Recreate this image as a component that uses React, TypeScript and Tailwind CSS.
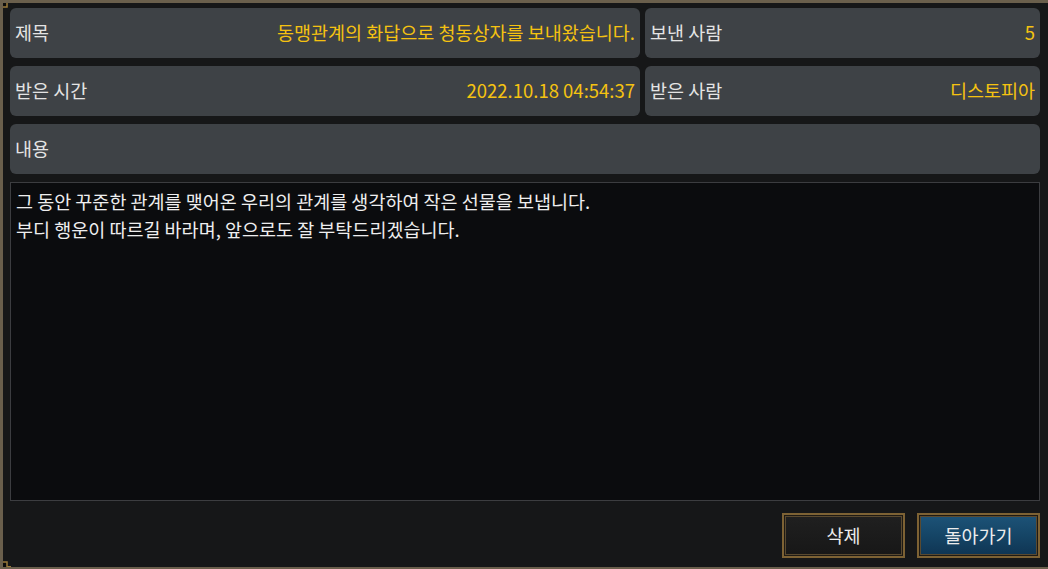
import React from "react";

type FieldProps = {
  label: string;
  value?: string;
  className?: string;
};

const Field: React.FC<FieldProps> = ({ label, value, className }) => (
  <div
    className={`flex h-[50px] items-center justify-between rounded-[6px] bg-[#3e4246] pl-[5px] pr-[5px] pb-[1px] ${className ?? ""}`}
  >
    <span className="text-[#e4e4e4]">{label}</span>
    {value ? <span className="text-[#f5c211]">{value}</span> : null}
  </div>
);

const Corner: React.FC<{ className: string }> = ({ className }) => (
  <svg
    className={`absolute h-[12px] w-[12px] ${className}`}
    viewBox="0 0 12 12"
  >
    <rect x="0" y="0" width="7" height="7" fill="#0c0c0c" stroke="#9a7a3a" strokeWidth="1.5" />
    <rect x="7" y="0" width="4" height="3" fill="#9a7a3a" />
    <rect x="0" y="7" width="3" height="4" fill="#9a7a3a" />
  </svg>
);

const GameButton: React.FC<{ label: string; blue?: boolean }> = ({
  label,
  blue,
}) => (
  <button
    className={`relative flex h-[45px] w-[123px] items-center justify-center border-2 border-[#7d6234] text-[18.5px] text-[#ececec] shadow-[inset_0_0_0_1px_#1e1a14,inset_0_0_0_2px_#5a4a30] ${
      blue
        ? "bg-gradient-to-b from-[#1d5378] via-[#154566] to-[#0f3452]"
        : "bg-gradient-to-b from-[#202020] to-[#171717]"
    }`}
  >
    {label}
  </button>
);

export default function App() {
  return (
    <div
      className="relative h-[569px] w-[1048px] overflow-hidden border-b-2 border-l-[3px] border-t-[3px] border-[#6a5f4c] bg-[#161718] text-[18.5px] leading-none"
      style={{
        fontFamily:
          '"Noto Sans CJK KR", "Noto Sans", "Liberation Sans", sans-serif',
      }}
    >
      <Corner className="left-[-3px] top-[-3px]" />
      <Corner className="bottom-[-2px] left-[-3px] rotate-[-90deg]" />
      <div className="flex h-full flex-col gap-[8px] pb-[9px] pl-[7px] pr-[8px] pt-[5px]">
        <div className="flex gap-[5px]">
          <Field
            className="w-[630px]"
            label="제목"
            value="동맹관계의 화답으로 청동상자를 보내왔습니다."
          />
          <Field className="flex-1" label="보낸 사람" value="5" />
        </div>
        <div className="flex gap-[5px]">
          <Field
            className="w-[630px]"
            label="받은 시간"
            value="2022.10.18 04:54:37"
          />
          <Field className="flex-1" label="받은 사람" value="디스토피아" />
        </div>
        <Field label="내용" className="h-[49px]" />
        <div className="h-[319px] border border-[#3c3d40] bg-[#0b0c0e] px-[5px] pt-[4px] leading-[28px] text-[#eeeeee]">
          <p>그 동안 꾸준한 관계를 맺어온 우리의 관계를 생각하여 작은 선물을 보냅니다.</p>
          <p>부디 행운이 따르길 바라며, 앞으로도 잘 부탁드리겠습니다.</p>
        </div>
        <div className="mt-[4px] flex justify-end gap-[12px]">
          <GameButton label="삭제" />
          <GameButton label="돌아가기" blue />
        </div>
      </div>
    </div>
  );
}
